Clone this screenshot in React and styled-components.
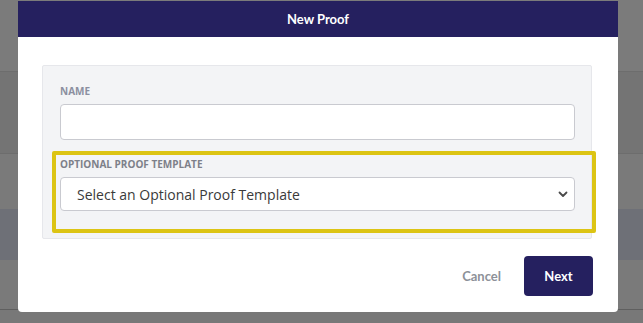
import React from 'react'
import styled, { createGlobalStyle } from 'styled-components'

const GlobalStyle = createGlobalStyle`
  html, body {
    margin: 0;
    padding: 0;
    width: 643px;
    height: 323px;
    overflow: hidden;
    background: #787878;
  }
  * { box-sizing: border-box; }
`

const Page = styled.div`
  position: relative;
  width: 643px;
  height: 323px;
  display: flex;
  flex-direction: column;
`

const Band = styled.div`
  height: ${p => p.h}px;
  flex: none;
  background: ${p => p.bg};
  border-bottom: ${p => (p.line ? `1px solid ${p.line}` : 'none')};
`

const Modal = styled.div`
  position: absolute;
  top: 1px;
  left: 18px;
  width: 600px;
  height: 311px;
  background: #ffffff;
  border-radius: 0 0 4px 4px;
  display: flex;
  flex-direction: column;
`

const Header = styled.div`
  height: 36px;
  background: #25205f;
  color: #ffffff;
  display: flex;
  align-items: center;
  justify-content: center;
  font-family: Lato, "Liberation Sans", sans-serif;
  font-weight: 700;
  font-size: 13px;
`

const Body = styled.div`
  padding: 28px 26px 0 24px;
`

const Card = styled.div`
  background: #f3f4f6;
  border: 1px solid #e6e7eb;
  border-radius: 2px;
  height: 174px;
  padding: 19px 16px 0 17px;
  display: flex;
  flex-direction: column;
`

const Field = styled.div`
  display: flex;
  flex-direction: column;
`

const Highlight = styled.div`
  margin: 11px -21px 0 -8px;
  border: 4px solid #dcc414;
  border-radius: 2px;
  padding: 3px 17px 18px 4px;
  display: flex;
  flex-direction: column;
`

const Label = styled.label`
  font-family: "Open Sans", "Liberation Sans", sans-serif;
  font-weight: 700;
  font-size: 10px;
  color: ${p => p.color || '#8b8fa0'};
  text-transform: uppercase;
  line-height: 13px;
  margin-bottom: ${p => p.gap}px;
`

const Input = styled.div`
  height: 36px;
  background: #ffffff;
  border: 1px solid #c9cad0;
  border-radius: 4px;
`

const Select = styled.div`
  height: 34px;
  background: #ffffff;
  border: 1px solid #c9cad0;
  border-radius: 4px;
  display: flex;
  align-items: center;
  justify-content: space-between;
  padding: 0 5px 0 16px;
  font-family: "Open Sans", "Liberation Sans", sans-serif;
  font-size: 14px;
  color: #3a3a3a;
`

const Footer = styled.div`
  display: flex;
  justify-content: flex-end;
  align-items: center;
  gap: 23px;
  padding: 17px 25px 0 0;
`

const Button = styled.button`
  font-family: Lato, "Liberation Sans", sans-serif;
  font-weight: 700;
  font-size: 13px;
  border: none;
  border-radius: 4px;
  height: 40px;
  padding: 0;
  width: ${p => (p.primary ? '69px' : 'auto')};
  background: ${p => (p.primary ? '#25205f' : 'transparent')};
  color: ${p => (p.primary ? '#ffffff' : '#8d9199')};
`

const Chevron = () => (
  <svg width="12" height="12" viewBox="0 0 12 12">
    <path d="M2.5 4.5 L6 8 L9.5 4.5" fill="none" stroke="#4a4a4a" strokeWidth="1.8" strokeLinecap="round" strokeLinejoin="round" />
  </svg>
)

export default function App() {
  return (
    <>
      <GlobalStyle />
      <Page>
        <Band h={72} bg="#7b7b7b" line="#6d6d6d" />
        <Band h={82} bg="#747474" line="#6d6d6d" />
        <Band h={55} bg="#7a7a7a" />
        <Band h={51} bg="#6e7077" />
        <Band h={50} bg="#7a7a7a" line="#5f5f5f" />
        <Band h={12} bg="#787878" />
        <Modal>
          <Header>New Proof</Header>
          <Body>
            <Card>
              <Field>
                <Label gap={6}>Name</Label>
                <Input />
              </Field>
              <Highlight>
                <Label gap={6} color="#7d8089">Optional Proof Template</Label>
                <Select>
                  <span>Select an Optional Proof Template</span>
                  <Chevron />
                </Select>
              </Highlight>
            </Card>
          </Body>
          <Footer>
            <Button>Cancel</Button>
            <Button primary>Next</Button>
          </Footer>
        </Modal>
      </Page>
    </>
  )
}
